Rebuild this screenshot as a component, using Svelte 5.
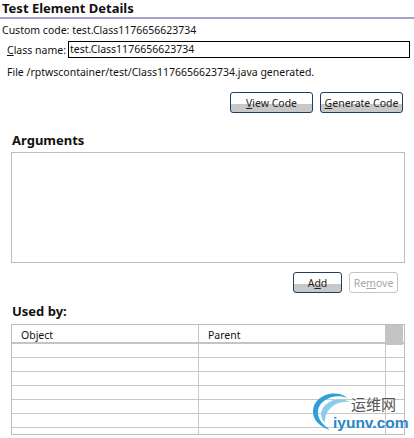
<script lang="ts">
	// Test element details panel, fixed snapshot data
	const className = 'test.Class1176656623734';
	const rows = [0, 1, 2, 3, 4, 5, 6];
</script>

<div class="panel">
	<h1>Test Element Details</h1>
	<p class="custom">Custom code: {className}</p>
	<div class="name-row">
		<span><u>C</u>lass name:</span>
		<div class="field">{className}</div>
	</div>
	<p class="status">File /rptwscontainer/test/Class1176656623734.java generated.</p>
	<div class="actions top">
		<button class="btn wide"><u>V</u>iew Code</button>
		<button class="btn wide"><u>G</u>enerate Code</button>
	</div>

	<h2 class="args">Arguments</h2>
	<div class="args-box"></div>
	<div class="actions bottom">
		<button class="btn small">A<u>d</u>d</button>
		<button class="btn small off">Re<u>m</u>ove</button>
	</div>

	<h2 class="used">Used by:</h2>
	<div class="table">
		<div class="head">
			<div class="cell obj">Object</div>
			<div class="cell par">Parent</div>
			<div class="spare"></div>
		</div>
		{#each rows as r (r)}
			<div class="row" class:last={r === 6}>
				<div class="c1"></div>
				<div class="c2"></div>
				<div class="c3"></div>
			</div>
		{/each}
	</div>

	<div class="mark">
		<svg width="44" height="50" viewBox="0 0 44 50" aria-hidden="true">
			<path d="M38 10C24 0 3 8 3 24C3 32 10 39 20 42C12 36 7 30 8 23C9 12 24 5 38 10Z" fill="#2f9fd8" />
			<path d="M40 14C28 7 12 14 11 26C11 30 13 33 15 35C14 24 24 12 40 14Z" fill="#8ccbea" />
		</svg>
		<span class="cn">运维网</span>
		<span class="en">iyunv.com</span>
	</div>
</div>

<style>
	:global(body) {
		margin: 0;
		background: #fff;
	}

	.panel {
		position: relative;
		width: 414px;
		height: 438px;
		overflow: hidden;
		box-sizing: border-box;
		font-family: 'Noto Sans', 'Noto Sans CJK SC', sans-serif;
		font-size: 10.5px;
		color: #111;
	}

	h1,
	h2,
	p {
		margin: 0;
	}

	h1 {
		font-size: 13px;
		line-height: 16px;
		font-weight: 700;
		padding-left: 2px;
		height: 17px;
		border-bottom: 2px solid #a5a2cc;
	}

	.custom {
		line-height: 16px;
		margin-top: 3px;
		padding-left: 2px;
	}

	.name-row {
		display: flex;
		align-items: center;
		gap: 5px;
		margin-top: 3px;
		padding-left: 7px;
	}

	.name-row span {
		width: 56px;
		white-space: nowrap;
	}

	.field {
		width: 342px;
		height: 17px;
		box-sizing: border-box;
		border: 1px solid #000;
		line-height: 15px;
		padding-left: 1px;
	}

	.status {
		line-height: 16px;
		margin-top: 6px;
		padding-left: 7px;
	}

	.actions {
		display: flex;
		justify-content: flex-end;
		gap: 7px;
	}

	.actions.top {
		margin-top: 12px;
		padding-right: 11px;
	}

	.actions.bottom {
		margin-top: 9px;
		padding-right: 16px;
	}

	.btn {
		box-sizing: border-box;
		padding: 0;
		height: 21px;
		font: inherit;
		color: #222;
		background: linear-gradient(#fff 60%, #c8c8c8 60%);
		border: 1px solid #1f3f5f;
		border-radius: 3px;
	}

	.wide {
		width: 83px;
	}

	.small {
		width: 49px;
	}

	.off {
		background: #fff;
		border-color: #c4c4c4;
		color: #a8a8a8;
	}

	h2 {
		font-size: 13px;
		line-height: 16px;
		font-weight: 700;
		padding-left: 12px;
	}

	.args {
		margin-top: 19px;
	}

	.args-box {
		margin: 4px 9px 0 11px;
		height: 111px;
		box-sizing: border-box;
		border: 1px solid #bdbdbd;
	}

	.used {
		margin-top: 10px;
	}

	.table {
		margin: 5px 9px 0 11px;
		box-sizing: border-box;
		border: 1px solid #bdbdbd;
	}

	.head {
		display: grid;
		grid-template-columns: 186px 187px 1fr;
		height: 17px;
		border-bottom: 2px solid #c4c4c4;
	}

	.cell {
		line-height: 20px;
		padding-left: 9px;
	}

	.par {
		border-left: 1px solid #c4c4c4;
	}

	.spare {
		background: #c4c4c4;
		margin-right: 1px;
	}

	.row {
		display: grid;
		grid-template-columns: 186px 187px 1fr;
		height: 13px;
		border-bottom: 1px solid #c8c8c8;
	}

	.row.last {
		height: 6px;
		border-bottom: 0;
	}

	.c2,
	.c3 {
		border-left: 1px solid #c8c8c8;
	}

	/* watermark sits on top of the table */
	.mark {
		position: absolute;
		left: 308px;
		top: 388px;
		width: 106px;
		height: 50px;
	}

	.mark svg {
		position: absolute;
		left: 2px;
		top: 0;
	}

	.cn {
		position: absolute;
		left: 43px;
		top: 6px;
		font-size: 15px;
		line-height: 20px;
		color: #555;
	}

	.en {
		position: absolute;
		left: 25px;
		top: 26px;
		font-family: 'Liberation Sans', sans-serif;
		font-size: 15.5px;
		line-height: 18px;
		font-weight: 700;
		color: #2a86c8;
		white-space: nowrap;
	}
</style>
